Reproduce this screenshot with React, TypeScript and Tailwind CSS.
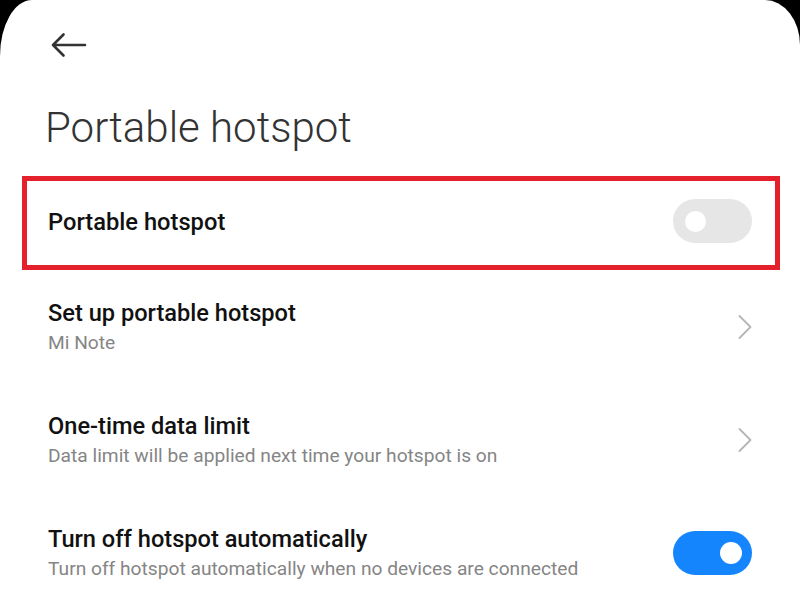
import React from "react";

function Chevron() {
  return (
    <svg width="16" height="26" viewBox="0 0 16 26" fill="none">
      <path d="M3.5 2 L14.5 13 L3.5 24" stroke="#b5b5b5" strokeWidth="1.8" strokeLinecap="round" strokeLinejoin="round" />
    </svg>
  );
}

function Toggle({ on }: { on: boolean }) {
  return on ? (
    <div className="w-[79px] h-[44px] shrink-0 rounded-full bg-[#1485fd] flex items-center justify-end pr-[10px]">
      <div className="w-[22px] h-[22px] rounded-full bg-white" />
    </div>
  ) : (
    <div className="w-[79px] h-[44px] shrink-0 mb-[4px] rounded-full bg-[#e6e6e6] flex items-center pl-[12px]">
      <div className="w-[21px] h-[21px] rounded-full bg-white" />
    </div>
  );
}

function Row({ title, sub, right }: { title: string; sub: string; right: React.ReactNode }) {
  return (
    <div className="h-[113px] shrink-0 flex items-center pl-[48px] pr-[48px]">
      <div className="flex-1 flex flex-col">
        <div className="text-[23.6px] leading-[30px] font-medium text-[#111]">{title}</div>
        <div className="text-[19.2px] leading-[24px] text-[#858585] mt-[2.5px]">{sub}</div>
      </div>
      {right}
    </div>
  );
}

export default function App() {
  return (
    <div className="w-[800px] h-[600px] bg-black overflow-hidden" style={{ fontFamily: "Roboto, 'Noto Sans', sans-serif" }}>
      <div className="w-full h-full bg-white rounded-tl-[32px_56px] rounded-tr-[35px_45px] flex flex-col overflow-hidden">
        <div className="pt-[25px] pl-[48px] h-[107px] shrink-0">
          <svg width="40" height="40" viewBox="0 0 40 40" fill="none">
            <path d="M5 20 H37 M15.5 9.5 L5 20 L15.5 30.5" stroke="#333" strokeWidth="2.6" strokeLinecap="round" strokeLinejoin="round" />
          </svg>
        </div>
        <div className="pl-[45px] text-[42px] leading-[42px] font-light text-[#333] shrink-0">Portable hotspot</div>
        <div className="mt-[27px] mx-[22px] w-[758px] h-[94px] shrink-0 border-[5px] border-[#e3202c] flex items-center pl-[21px] pr-[23px]">
          <div className="flex-1 text-[23.7px] font-medium text-[#111]">Portable hotspot</div>
          <Toggle on={false} />
        </div>
        <Row title="Set up portable hotspot" sub="Mi Note" right={<Chevron />} />
        <Row title="One-time data limit" sub="Data limit will be applied next time your hotspot is on" right={<Chevron />} />
        <Row title="Turn off hotspot automatically" sub="Turn off hotspot automatically when no devices are connected" right={<Toggle on={true} />} />
      </div>
    </div>
  );
}
